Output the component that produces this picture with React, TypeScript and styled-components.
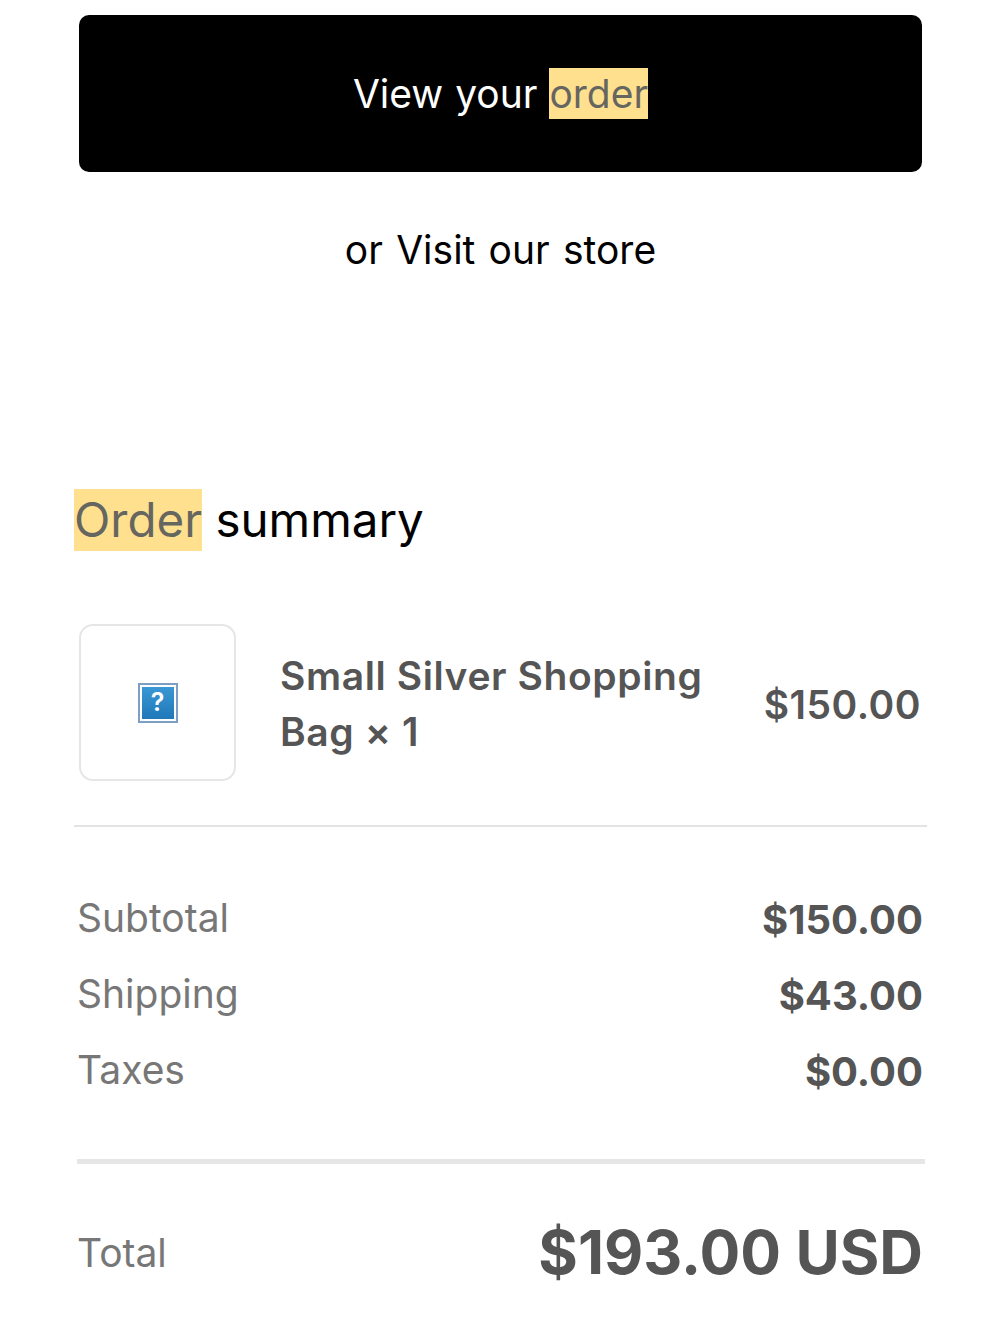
import styled, { createGlobalStyle } from "styled-components";

const GlobalStyle = createGlobalStyle`
  html, body {
    margin: 0;
    padding: 0;
    background: #fff;
    font-family: Inter, "Liberation Sans", sans-serif;
  }
`;

const Page = styled.div`
  width: 1000px;
  height: 1333px;
  overflow: hidden;
  box-sizing: border-box;
  padding: 15px 73px 0 74px;
`;

const ViewButton = styled.div`
  margin: 0 5px;
  height: 157px;
  border-radius: 10px;
  background: #000;
  color: #fff;
  display: flex;
  align-items: center;
  justify-content: center;
  font-size: 39px;
  word-spacing: 1px;
  box-sizing: border-box;
`;

const Mark = styled.mark`
  background: #ffe08f;
  color: #666660;
  display: inline-block;
  line-height: ${(p: { $lh: number }) => p.$lh}px;
`;

const StoreLink = styled.div`
  margin-top: 50px;
  text-align: center;
  font-size: 39px;
  line-height: 56px;
  word-spacing: 2.3px;
  color: #000;
`;

const Heading = styled.h2`
  margin: 211px 0 0;
  font-size: 47.5px;
  line-height: 62px;
  font-weight: 400;
  color: #000;
`;

const ItemRow = styled.div`
  margin-top: 73px;
  padding: 0 6px 44px 5px;
  display: flex;
  align-items: center;
  border-bottom: 2px solid #e3e3e3;
`;

const Thumb = styled.div`
  width: 157px;
  height: 157px;
  flex: none;
  box-sizing: border-box;
  border: 2px solid #e6e6e6;
  border-radius: 14px;
  display: flex;
  align-items: center;
  justify-content: center;
`;

const Placeholder = styled.div`
  width: 40px;
  height: 40px;
  box-sizing: border-box;
  border: 2px solid #7d9fc4;
  padding: 2px;
  background: #fff;
  display: flex;
`;

const PlaceholderInner = styled.div`
  flex: 1;
  background: linear-gradient(#3a98d4, #1f78b8);
  color: #fff;
  font-size: 25px;
  line-height: 30px;
  font-weight: 600;
  text-align: center;
`;

const ItemName = styled.div`
  margin-left: 44px;
  padding-top: 2px;
  width: 470px;
  font-size: 39px;
  letter-spacing: 0.6px;
  line-height: 56px;
  font-weight: 600;
  color: #555;
`;

const ItemPrice = styled.div`
  margin-left: auto;
  padding-top: 4px;
  font-size: 39px;
  letter-spacing: 0.5px;
  font-weight: 600;
  color: #555;
`;

const Lines = styled.div`
  padding: 62px 4px 0 3px;
  display: flex;
  flex-direction: column;
  gap: 20px;
`;

const Line = styled.div`
  display: flex;
  justify-content: space-between;
  align-items: center;
  height: 56px;
`;

const Label = styled.span`
  font-size: 39px;
  color: #777;
`;

const Amount = styled.span`
  padding-top: 4px;
  font-size: 40px;
  font-weight: 700;
  color: #555;
`;

const ThickRule = styled.div`
  margin: 62px 2px 0 3px;
  height: 5px;
  background: #e6e6e6;
`;

const TotalRow = styled.div`
  margin-top: 50px;
  padding: 0 4px 0 3px;
  display: flex;
  justify-content: space-between;
  align-items: center;
  height: 76px;
`;

const TotalAmount = styled.span`
  font-size: 60.5px;
  font-weight: 700;
  color: #555;
`;

export default function App() {
  return (
    <>
      <GlobalStyle />
      <Page>
        <ViewButton>
          View your&nbsp;<Mark $lh={51}>order</Mark>
        </ViewButton>
        <StoreLink>or Visit our store</StoreLink>
        <Heading>
          <Mark $lh={62}>Order</Mark> summary
        </Heading>
        <ItemRow>
          <Thumb>
            <Placeholder>
              <PlaceholderInner>?</PlaceholderInner>
            </Placeholder>
          </Thumb>
          <ItemName>Small Silver Shopping Bag × 1</ItemName>
          <ItemPrice>$150.00</ItemPrice>
        </ItemRow>
        <Lines>
          <Line>
            <Label>Subtotal</Label>
            <Amount>$150.00</Amount>
          </Line>
          <Line>
            <Label>Shipping</Label>
            <Amount>$43.00</Amount>
          </Line>
          <Line>
            <Label>Taxes</Label>
            <Amount>$0.00</Amount>
          </Line>
        </Lines>
        <ThickRule />
        <TotalRow>
          <Label>Total</Label>
          <TotalAmount>$193.00 USD</TotalAmount>
        </TotalRow>
      </Page>
    </>
  );
}
